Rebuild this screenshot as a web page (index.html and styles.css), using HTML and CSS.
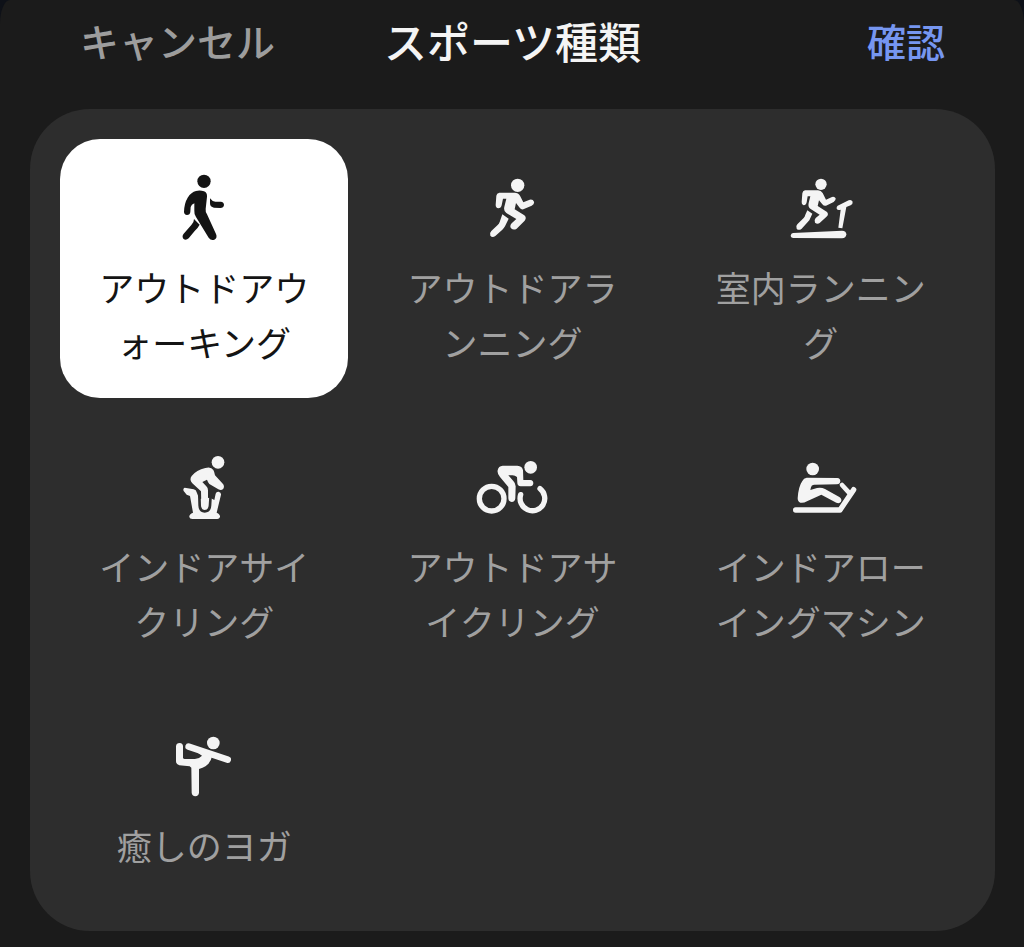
FILE: index.html
```html
<!DOCTYPE html>
<html lang="ja">
<head>
<meta charset="utf-8">
<meta name="viewport" content="width=device-width, initial-scale=1">
<title>スポーツ種類</title>
<link rel="stylesheet" href="styles.css">
</head>
<body>
<main class="sheet">
  <header class="bar">
    <button class="action cancel" type="button">キャンセル</button>
    <h1 class="title">スポーツ種類</h1>
    <button class="action confirm" type="button">確認</button>
  </header>
  <section class="card">
    <button class="sport selected" type="button" aria-pressed="true">
      <svg class="icon" viewBox="-3 0 270 270" aria-hidden="true">
        <circle cx="132" cy="64" r="20" fill="currentColor"/>
        <path fill="currentColor" d="M108 93Q120 90 132 94Q142 98 141 110L137 147Q136 156 141 163L168 222Q173 234 163 239Q153 243 146 233L108 171Q102 162 103 152L103 130Q94 133 92 141L91 156Q90 165 81 165Q72 164 72 155Q73 129 83 113Q94 96 108 93Z"/>
        <path fill="currentColor" d="M150 115Q156 124 166 125L182 125Q192 126 192 135Q191 144 181 144L162 143Q150 141 150 130Z"/>
        <path fill="currentColor" d="M102 177L119 194Q113 205 104 213L86 235Q77 243 70 236Q65 229 71 221L94 195Q102 188 102 177Z"/>
      </svg>
      <span class="label">アウトドアウォーキング</span>
    </button>
    <button class="sport" type="button" aria-pressed="false">
      <svg class="icon" viewBox="-9 -15 270 270" aria-hidden="true">
        <circle cx="143" cy="61" r="20" fill="currentColor"/>
        <path fill="currentColor" d="M88 83L134 83Q145 83 150 92L160 112L179 104Q189 102 192 110Q194 118 185 122L160 133Q153 134 149 128L138 114L134 133L163 151Q171 158 164 167L140 191Q131 197 123 190Q118 182 125 175L139 162L109 144Q100 138 103 125L109 101L99 101L95 121Q93 130 85 130Q77 129 77 120L79 92Q80 84 88 83Z"/>
        <path fill="currentColor" d="M97 148L116 161L105 184Q102 190 97 194L76 213Q67 219 61 212Q57 205 64 198L83 180Q87 177 89 171Z"/>
      </svg>
      <span class="label">アウトドアランニング</span>
    </button>
    <button class="sport" type="button" aria-pressed="false">
      <svg class="icon" viewBox="3 -15 270 270" aria-hidden="true">
        <circle cx="138" cy="58" r="17" fill="currentColor"/>
        <path fill="currentColor" d="M90 76L129 76Q138 76 143 84L153 104L171 96Q179 94 182 100Q183 107 176 111L153 122Q147 124 142 118L132 106L128 123L155 140Q162 146 156 154L134 174Q127 179 120 173Q116 166 122 159L134 149L107 132Q98 126 101 114L106 94L98 94L95 112Q93 121 86 121Q79 119 80 111L82 85Q83 77 90 76Z"/>
        <path fill="currentColor" d="M97 136L112 146L103 166L80 191Q71 198 65 191Q61 184 67 178L86 159Q90 155 91 149Z"/>
        <path fill="currentColor" d="M188 122L221 106Q229 103 233 110Q234 117 227 121L214 126L202 190L190 188L197 134Q188 137 185 131Q184 125 188 122Z"/>
        <path fill="currentColor" d="M54 204L201 197Q214 198 214 208Q213 220 201 220L54 219Q47 218 47 212Q48 205 54 204Z"/>
      </svg>
      <span class="label">室内ランニング</span>
    </button>
    <button class="sport" type="button" aria-pressed="false">
      <svg class="icon" viewBox="-3 -18 270 270" aria-hidden="true">
        <path fill="currentColor" d="M74 128L101 133Q109 135 110 142L118 162L150 158L163 165L167 146Q169 139 176 140Q184 142 183 149L170 203Q181 208 180 216Q178 222 172 222L97 222Q89 222 88 216Q87 208 99 203L90 153L80 149L71 138Q68 130 74 128Z"/>
        <path class="groove" d="M118 150L119 181Q120 199 134 199Q149 199 150 181L152 150"/>
        <circle cx="174" cy="52" r="19" fill="currentColor"/>
        <path fill="currentColor" d="M136 69Q153 64 160 75Q163 80 165 91L187 115Q195 123 190 131Q184 138 175 133L148 117Q143 110 141 104L127 111L139 124Q144 129 144 136L144 181Q143 190 134 190Q125 190 124 181L123 139L97 115Q87 104 95 93Q109 75 136 69Z"/>
      </svg>
      <span class="label">インドアサイクリング</span>
    </button>
    <button class="sport" type="button" aria-pressed="false">
      <svg class="icon" viewBox="0 -18 270 270" aria-hidden="true">
        <circle cx="191" cy="67" r="19" fill="currentColor"/>
        <path fill="currentColor" d="M107 62L151 62Q166 63 168 76L169 105L190 105Q199 106 199 115Q198 124 190 124L161 124Q151 123 151 113L150 96Q143 90 134 91L124 91L139 108Q146 115 146 124L145 160Q144 171 134 171Q124 170 124 160L124 126L99 96Q90 86 92 76Q94 63 107 62Z"/>
        <circle cx="74" cy="161" r="37" fill="none" stroke="currentColor" stroke-width="16"/>
        <path fill="none" stroke="currentColor" stroke-width="16" stroke-linecap="round" d="M161 149A37 37 0 1 0 219 131"/>
      </svg>
      <span class="label">アウトドアサイクリング</span>
    </button>
    <button class="sport" type="button" aria-pressed="false">
      <svg class="icon" viewBox="-12 -18 270 270" aria-hidden="true">
        <circle cx="98" cy="72" r="19" fill="currentColor"/>
        <path fill="currentColor" d="M80 98L172 99Q181 100 181 109Q180 118 171 118L102 119Q94 120 93 127L91 135L111 129Q124 126 135 132L178 156Q187 162 183 170Q178 177 169 173L124 149L81 169Q70 175 61 173Q53 170 53 160Q55 125 67 108Q71 99 80 98Z"/>
        <path fill="none" stroke="currentColor" stroke-width="16" stroke-linecap="round" stroke-linejoin="round" d="M47 195L180 195L221 134"/>
        <path fill="none" stroke="currentColor" stroke-width="14" stroke-linecap="round" d="M186 120L207 143"/>
      </svg>
      <span class="label">インドアローイングマシン</span>
    </button>
    <button class="sport" type="button" aria-pressed="false">
      <svg class="icon" viewBox="-3 -21 270 270" aria-hidden="true">
        <circle cx="160" cy="54" r="19" fill="currentColor"/>
        <path fill="none" stroke="currentColor" stroke-width="20" stroke-linecap="round" d="M86 65L203 104"/>
        <path fill="currentColor" d="M48 64Q49 54 59 54Q69 55 69 64L69 98Q70 102 74 102L105 102Q118 101 126 92L110 81L156 94Q151 123 117 132L117 203Q116 213 106 214Q96 213 95 203L94 128L89 124L58 121Q48 118 48 109Z"/>
      </svg>
      <span class="label">癒しのヨガ</span>
    </button>
  </section>
</main>
</body>
</html>
```
FILE: styles.css
```css
* {
  box-sizing: border-box;
}

body {
  margin: 0;
  background: #0e1118;
  font-family: "Noto Sans CJK JP", sans-serif;
}

button {
  margin: 0;
  border: 0;
  background: none;
  font: inherit;
  cursor: pointer;
}

.sheet {
  min-height: 100vh;
  padding: 0 29px 16px 30px;
  border-radius: 10px 10px 0 0 / 24px 24px 0 0;
  background: #1b1b1b;
}

.bar {
  display: grid;
  grid-template-columns: 1fr auto 1fr;
  align-items: center;
  height: 80px;
  margin-bottom: 29px;
  padding: 0 50px;
}

.action {
  padding: 0;
  font-size: 39px;
  font-weight: 500;
  line-height: 56px;
}

.cancel {
  justify-self: start;
  color: #9d9d9d;
}

.confirm {
  justify-self: end;
  color: #7696f0;
}

.title {
  margin: 0;
  color: #f4f4f4;
  font-size: 43px;
  font-weight: 500;
  line-height: 56px;
}

.card {
  display: grid;
  grid-template-columns: repeat(3, 1fr);
  gap: 20px;
  padding: 30px;
  border-radius: 60px;
  background: #2d2d2d;
}

.sport {
  display: flex;
  flex-direction: column;
  align-items: center;
  gap: 9px;
  padding: 21px 32px 29px;
  border-radius: 40px;
  color: #f4f4f4;
}

.selected {
  background: #fff;
  color: #141414;
}

.icon {
  width: 90px;
  height: 90px;
}

.groove {
  fill: none;
  stroke: #2d2d2d;
  stroke-width: 8;
}

.label {
  color: #a0a0a0;
  font-size: 35px;
  line-height: 55px;
  max-width: 224px;
  line-break: anywhere;
}

.selected .label {
  color: #141414;
}
```
